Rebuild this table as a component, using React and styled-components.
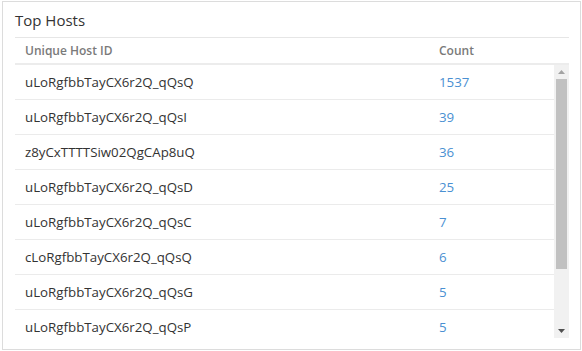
import React from 'react';
import styled, { createGlobalStyle } from 'styled-components';

const GlobalStyle = createGlobalStyle`
  body {
    margin: 0;
    background: #fff;
    font-family: "Open Sans", "Liberation Sans", sans-serif;
  }
`;

const Card = styled.div`
  box-sizing: border-box;
  margin: 1px 1px 0 2px;
  width: 579px;
  height: 349px;
  border: 1px solid #dcdcdc;
  padding: 0 11px 0 12px;
  display: flex;
  flex-direction: column;
`;

const Title = styled.div`
  height: 35px;
  line-height: 36px;
  font-size: 15px;
  color: #333;
  border-bottom: 1px solid #e6e6e6;
`;

const HeaderRow = styled.div`
  display: flex;
  align-items: center;
  height: 25px;
  border-bottom: 2px solid #ececec;
  font-size: 12px;
  font-weight: 600;
  color: #7a7a7a;
`;

const IdCell = styled.div`
  width: 424px;
  padding-left: 10px;
  box-sizing: border-box;
  white-space: nowrap;
`;

const CountCell = styled.div`
  flex: 1;
  color: ${(p) => (p.$link ? '#4a90d2' : 'inherit')};
`;

const Body = styled.div`
  display: flex;
  height: 273px;
`;

const Rows = styled.div`
  flex: 1;
  overflow: hidden;
`;

const Row = styled.div`
  display: flex;
  align-items: center;
  flex-shrink: 0;
  height: 34px;
  border-bottom: 1px solid #ebebeb;
  font-size: 13.3px;
  color: #333;
`;

const Scrollbar = styled.div`
  width: 15px;
  background: #f1f1f1;
  display: flex;
  flex-direction: column;
  align-items: center;
`;

const Arrow = styled.div`
  height: 14px;
  display: flex;
  align-items: center;
  justify-content: center;
`;

const Track = styled.div`
  flex: 1;
  width: 100%;
  padding: 0 2px;
  box-sizing: border-box;
`;

const Thumb = styled.div`
  height: 190px;
  background: #c1c1c1;
`;

const hosts = [
  ['uLoRgfbbTayCX6r2Q_qQsQ', 1537],
  ['uLoRgfbbTayCX6r2Q_qQsI', 39],
  ['z8yCxTTTTSiw02QgCAp8uQ', 36],
  ['uLoRgfbbTayCX6r2Q_qQsD', 25],
  ['uLoRgfbbTayCX6r2Q_qQsC', 7],
  ['cLoRgfbbTayCX6r2Q_qQsQ', 6],
  ['uLoRgfbbTayCX6r2Q_qQsG', 5],
  ['uLoRgfbbTayCX6r2Q_qQsP', 5],
];

const Triangle = ({ up }) => (
  <svg width="7" height="4" viewBox="0 0 7 4">
    <path d={up ? 'M0 4 L3.5 0 L7 4 Z' : 'M0 0 L7 0 L3.5 4 Z'} fill={up ? '#a3a3a3' : '#505050'} />
  </svg>
);

export default function App() {
  return (
    <>
      <GlobalStyle />
      <Card>
        <Title>Top Hosts</Title>
        <HeaderRow>
          <IdCell>Unique Host ID</IdCell>
          <CountCell>Count</CountCell>
        </HeaderRow>
        <Body>
          <Rows>
            {hosts.map(([id, n], i) => (
              <Row key={i}>
                <IdCell>{id}</IdCell>
                <CountCell $link>{n}</CountCell>
              </Row>
            ))}
          </Rows>
          <Scrollbar>
            <Arrow>
              <Triangle up />
            </Arrow>
            <Track>
              <Thumb />
            </Track>
            <Arrow>
              <Triangle />
            </Arrow>
          </Scrollbar>
        </Body>
      </Card>
    </>
  );
}
